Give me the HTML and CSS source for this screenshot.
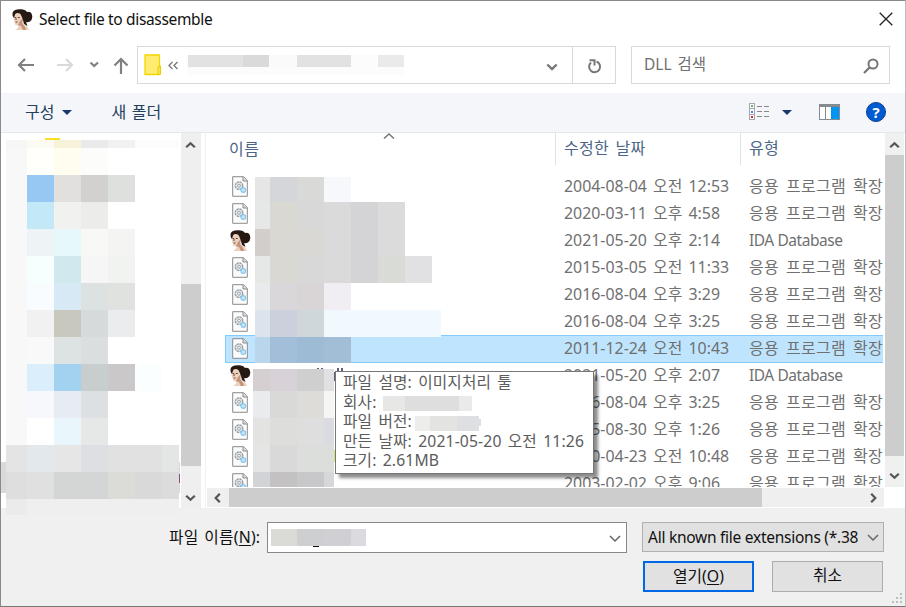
FILE: index.html
```
<!DOCTYPE html>
<html lang="ko">
<head>
<meta charset="utf-8">
<title>Select file to disassemble</title>
<link rel="stylesheet" href="styles.css">
</head>
<body>
<svg width="0" height="0" class="defs">
  <symbol id="face" viewBox="0 0 21 21">
    <path fill="#ecd0be" d="M2.500 4Q6 1 10 4L12 9L11 13L12 16Q15 16 17 21H3.500L6.500 18L6 16.500L3.500 16L2.500 13L1.500 10Z"/>
    <path fill="#c4937a" d="M8 12L11 9L10 14L13 18L14 21H11L9 17L6 16Z"/>
    <path fill="#261813" d="M.5 4Q1 .5 8 .3Q13 0 15 3Q19 2 20 6Q21 8 19.500 11Q17 14 14 13L15.500 17L12 15L11 11Q10 8 8.500 5Q5.500 3 3.200 5L2 9Q0 7 .5 4Z"/>
    <path stroke="#5b3425" stroke-width=".9" fill="none" d="M2.500 8.500H4.200M5.800 8.500H7.800M3.500 13H5.500M4 9V11"/>
  </symbol>
  <symbol id="dll" viewBox="0 0 16 21">
    <path fill="#fbfbfb" stroke="#8b8b8b" d="M.7.700H11.500L15.300 4.500V20.300H.7Z"/>
    <path fill="#ddd" stroke="#8b8b8b" d="M11 .7V5H15.300"/>
    <circle cx="7" cy="9.700" r="3.700" fill="#edf1f3" stroke="#9aa2a8" stroke-width="1.500" stroke-dasharray="2.300 .6"/>
    <circle cx="7" cy="9.700" r="1.500" fill="none" stroke="#8d989f" stroke-width=".9"/>
    <circle cx="11.300" cy="14" r="2.300" fill="#bfe6fb" stroke="#8cc8ea" stroke-width="1.200"/>
  </symbol>
  <symbol id="down" viewBox="0 0 12 8"><path d="M1.300 1.500L6 6L10.700 1.500" fill="none" stroke="currentColor" stroke-width="2.400"/></symbol>
  <symbol id="thin-down" viewBox="0 0 12 8"><path d="M1 1L6 6L11 1" fill="none" stroke="currentColor" stroke-width="1.500"/></symbol>
</svg>
<main class="dialog">
  <header class="title"><svg class="face"><use href="#face"/></svg><h1>Select file to disassemble</h1>
    <svg class="close" viewBox="0 0 14 14"><path d="M.7.700L13.300 13.300M13.300.7L.7 13.300" fill="none" stroke="#222" stroke-width="1.300"/></svg>
  </header>
  <nav class="nav">
    <svg class="arrows" viewBox="0 0 120 24" fill="none" stroke="#808080" stroke-width="2.200">
      <path d="M9 12H24M15 6L9 12L15 18"/><path stroke="#d9d9d9" d="M47 12H62M56 6L62 12L56 18"/>
      <path d="M80.500 9.500L84.200 13L88 9.500"/><path d="M111 21V6M104.500 12.500L111 6L117.500 12.500"/>
    </svg>
    <div class="address">
      <svg class="folder" viewBox="0 0 18 22"><path d="M1 1H15.500V20.500H1Z" fill="#ffec70" stroke="#f3d600" stroke-width="1.300"/><path d="M14 20.500V13L16.500 12V20.500Z" fill="#ffe440" stroke="#eccb00"/></svg>
      <svg class="chev" viewBox="0 0 12 9"><path d="M5.500 1L2 4.500L5.500 8M10.500 1L7 4.500L10.500 8" fill="none" stroke="#777" stroke-width="1.300"/></svg>
      <svg class="pathmask" viewBox="0 0 217 20" shape-rendering="crispEdges"><path fill="#fcfcfc" d="M0 0H217V20H0Z"/><path fill="#e2e2e2" d="M1 0H56V12H1ZM110 0H164V12H110Z"/><path fill="#dadada" d="M56 0H82V12H56Z"/><path fill="#fafafa" d="M82 0H110V12H82Z"/><path fill="#eaeaea" d="M191 0H217V12H191Z"/></svg>
      <svg class="drop"><use href="#down"/></svg>
      <div class="refresh"><svg viewBox="0 0 14 15"><path d="M8.500 2.500A5.500 5.500 0 1 1 3 3.500M1.500 1.200H6.500V6.500" fill="none" stroke="#777" stroke-width="2"/></svg></div>
    </div>
    <div class="search"><span>DLL 검색</span><svg viewBox="0 0 16 16"><circle cx="10" cy="6" r="4.500" fill="none" stroke="#777" stroke-width="2"/><path d="M6.800 9.200L1 15" stroke="#777" stroke-width="2.300"/></svg></div>
  </nav>
  <div class="toolbar">
    <span class="organize">구성</span><i class="tri"></i><span class="new">새 폴더</span>
    <svg class="view" viewBox="0 0 22 18" fill="none" shape-rendering="crispEdges"><path stroke="#a8a8a8" fill="#fff" d="M.5.500H5.500V16.500H.5ZM.5 5.500H5.500M.5 11.500H5.500"/><path stroke="#888" stroke-dasharray="5 2" d="M8 3.500H21M8 8.500H21M8 13.500H21"/><path fill="#6a9" d="M2 2H4V4H2Z"/><path fill="#48e" d="M2 8H4V10H2Z"/><path fill="#e23" d="M2 13H4V15H2Z"/></svg>
    <i class="tri second"></i>
    <svg class="pane" viewBox="0 0 21 16" shape-rendering="crispEdges"><path fill="#868b90" d="M0 0H21V16H0Z"/><path fill="#fff" d="M1 3H6V15H1ZM7 3H12V15H7Z"/><path fill="#0094f5" d="M12 3H20V15H12Z"/></svg>
    <span class="help">?</span>
  </div>
  <section class="content">
    <aside class="tree">
      <svg class="treemask" viewBox="1 133 180 382" shape-rendering="crispEdges">
        <path fill="#f0f0f0" d="M1 508H181V515H1Z"/><path fill="#fbdf23" d="M45 138H60V140H45Z"/>
        <path fill="#d9d9d9" d="M1 462H180V493H1Z"/><path fill="#8b4a86" d="M179 474H180V483H179Z"/>
        <path fill="#f8f8f8" d="M6 140H27V445H6Z"/><path fill="#f5f7f6" d="M6 140H27V148H6Z"/>
        <path fill="#fbfbf3" d="M27 140H54V148H27Z"/><path fill="#f7f2da" d="M54 140H81V148H54Z"/><path fill="#eaeaea" d="M81 140H108V148H81Z"/><path fill="#f0f2f1" d="M108 140H135V148H108Z"/><path fill="#fbfdfc" d="M135 140H179V148H135Z"/>
        <path fill="#fffffb" d="M27 148H54V175H27Z"/><path fill="#fffdef" d="M54 148H81V175H54Z"/><path fill="#fcfdfa" d="M81 148H108V175H81Z"/>
        <path fill="#97c8f4" d="M27 175H54V202H27Z"/><path fill="#e2e0de" d="M54 175H81V202H54Z"/><path fill="#d2d1cf" d="M81 175H108V202H81Z"/><path fill="#dee0de" d="M108 175H135V202H108Z"/>
        <path fill="#c3e9f8" d="M27 202H54V229H27Z"/><path fill="#f1f1f0" d="M54 202H81V229H54Z"/><path fill="#ececeb" d="M81 202H108V229H81Z"/>
        <path fill="#eef4f6" d="M27 229H54V256H27Z"/><path fill="#e7f8fc" d="M54 229H81V256H54Z"/><path fill="#f8f8f6" d="M81 229H108V256H81Z"/><path fill="#f4f4f3" d="M108 229H135V256H108Z"/>
        <path fill="#f5fffe" d="M27 256H54V283H27Z"/><path fill="#d0e8ee" d="M54 256H81V283H54Z"/><path fill="#f6f6f7" d="M81 256H108V283H81Z"/><path fill="#f1f3f0" d="M108 256H135V283H108Z"/>
        <path fill="#f8fcff" d="M27 283H54V310H27Z"/><path fill="#d6e9f5" d="M54 283H81V310H54Z"/><path fill="#dce1e2" d="M81 283H108V310H81Z"/><path fill="#e0e2e0" d="M108 283H135V310H108Z"/>
        <path fill="#f1f1f1" d="M27 310H54V337H27Z"/><path fill="#c8c8be" d="M54 310H81V337H54Z"/><path fill="#d6dadb" d="M81 310H108V337H81Z"/><path fill="#ebecee" d="M108 310H135V337H108Z"/>
        <path fill="#f9f9f9" d="M27 337H54V364H27Z"/><path fill="#dde3e3" d="M54 337H81V364H54Z"/><path fill="#dadede" d="M81 337H108V364H81Z"/>
        <path fill="#dbeefc" d="M27 364H54V391H27Z"/><path fill="#a2d2ef" d="M54 364H81V391H54Z"/><path fill="#c8cdcd" d="M81 364H108V391H81Z"/><path fill="#cbc8c9" d="M108 364H135V391H108Z"/><path fill="#fbfeff" d="M135 364H162V391H135Z"/>
        <path fill="#f7f8fb" d="M27 391H54V418H27Z"/><path fill="#e7ebf4" d="M54 391H81V418H54Z"/><path fill="#dce0e3" d="M81 391H108V418H81Z"/>
        <path fill="#e9f6fc" d="M54 418H81V445H54Z"/><path fill="#e6e8e7" d="M81 418H108V445H81Z"/>
        <path fill="#e4e4e4" d="M6 445H27V472H6Z"/><path fill="#e3e8ec" d="M27 445H54V472H27Z"/><path fill="#e6e6e6" d="M54 445H81V472H54Z"/><path fill="#dedfe2" d="M81 445H108V472H81Z"/><path fill="#e1e1e1" d="M108 445H162V472H108Z"/><path fill="#e4e6e5" d="M162 445H179V472H162Z"/>
        <path fill="#dedede" d="M6 472H27V499H6Z"/><path fill="#e0e0e0" d="M27 472H54V499H27Z"/><path fill="#d4d6d5" d="M54 472H108V499H54Z"/><path fill="#dbdbd8" d="M108 472H135V499H108Z"/><path fill="#d9d9d9" d="M135 472H162V499H135Z"/><path fill="#dcdcdc" d="M162 472H179V499H162Z"/>
        <path fill="#ebebeb" d="M6 499H27V515H6Z"/><path fill="#efefef" d="M27 499H179V515H27Z"/>
      </svg>
    </aside>
    <div class="vscroll left"><svg class="up"><use href="#down"/></svg><i></i><svg><use href="#down"/></svg></div>
    <div class="split"></div>
    <div class="files">
      <div class="listarea">
        <div class="list">
          <svg class="sort" viewBox="0 0 12 6"><path d="M1 5.500L6 1L11 5.500" fill="none" stroke="#777" stroke-width="1.500"/></svg>
          <div class="row head"><span class="name">이름</span><span class="date">수정한 날짜</span><span class="type">유형</span></div>
          <div class="row"><span class="name"><svg class="dll"><use href="#dll"/></svg></span><span class="date">2004-08-04 오전 12:53</span><span class="type">응용 프로그램 확장</span></div>
          <div class="row"><span class="name"><svg class="dll"><use href="#dll"/></svg></span><span class="date">2020-03-11 오후 4:58</span><span class="type">응용 프로그램 확장</span></div>
          <div class="row"><span class="name"><svg class="face"><use href="#face"/></svg></span><span class="date">2021-05-20 오후 2:14</span><span class="type en">IDA Database</span></div>
          <div class="row"><span class="name"><svg class="dll"><use href="#dll"/></svg></span><span class="date">2015-03-05 오전 11:33</span><span class="type">응용 프로그램 확장</span></div>
          <div class="row"><span class="name"><svg class="dll"><use href="#dll"/></svg></span><span class="date">2016-08-04 오후 3:29</span><span class="type">응용 프로그램 확장</span></div>
          <div class="row"><span class="name"><svg class="dll"><use href="#dll"/></svg></span><span class="date">2016-08-04 오후 3:25</span><span class="type">응용 프로그램 확장</span></div>
          <div class="row selected"><span class="name"><svg class="dll"><use href="#dll"/></svg></span><span class="date">2011-12-24 오전 10:43</span><span class="type">응용 프로그램 확장</span></div>
          <div class="row"><span class="name"><svg class="face"><use href="#face"/></svg></span><span class="date">2021-05-20 오후 2:07</span><span class="type en">IDA Database</span></div>
          <div class="row"><span class="name"><svg class="dll"><use href="#dll"/></svg></span><span class="date">2016-08-04 오후 3:25</span><span class="type">응용 프로그램 확장</span></div>
          <div class="row"><span class="name"><svg class="dll"><use href="#dll"/></svg></span><span class="date">2015-08-30 오후 1:26</span><span class="type">응용 프로그램 확장</span></div>
          <div class="row"><span class="name"><svg class="dll"><use href="#dll"/></svg></span><span class="date">2010-04-23 오전 10:48</span><span class="type">응용 프로그램 확장</span></div>
          <div class="row"><span class="name"><svg class="dll"><use href="#dll"/></svg></span><span class="date">2003-02-02 오후 9:06</span><span class="type">응용 프로그램 확장</span></div>
          <svg class="namemask" viewBox="253 177 190 311" shape-rendering="crispEdges">
            <path fill="#e6e6e6" d="M255 177H270V202H255Z"/><path fill="#d5d6d9" d="M270 177H297V202H270Z"/><path fill="#d9d9d7" d="M297 177H324V202H297Z"/><path fill="#f7f8fb" d="M324 177H351V202H324Z"/>
            <path fill="#e5e8e6" d="M255 202H270V229H255ZM255 256H270V283H255Z"/><path fill="#d3cecc" d="M255 229H270V256H255Z"/><path fill="#d9d8d3" d="M270 202H297V283H270Z"/><path fill="#d8d8d8" d="M297 202H324V229H297ZM297 256H324V283H297Z"/><path fill="#d9d8d5" d="M297 229H324V256H297Z"/><path fill="#dadada" d="M324 202H351V283H324Z"/><path fill="#d4d4d7" d="M351 202H378V283H351Z"/><path fill="#dbdbdb" d="M378 202H405V256H378Z"/><path fill="#d9dbd7" d="M378 256H405V283H378Z"/><path fill="#e1e1e3" d="M405 256H432V283H405Z"/>
            <path fill="#e8eaec" d="M255 283H270V310H255Z"/><path fill="#d9d7d9" d="M270 283H297V310H270Z"/><path fill="#d9d5d7" d="M297 283H324V310H297Z"/><path fill="#f0eef3" d="M324 283H351V310H324Z"/>
            <path fill="#dbe4eb" d="M255 310H270V337H255Z"/><path fill="#cbd0dc" d="M270 310H297V337H270Z"/><path fill="#cfd7da" d="M297 310H324V337H297Z"/><path fill="#f1f8fe" d="M324 310H441V337H324Z"/>
            <path fill="#b9d6eb" d="M255 337H270V363H255Z"/><path fill="#a2bed8" d="M270 337H297V363H270Z"/><path fill="#9dbbd4" d="M297 337H324V363H297Z"/><path fill="#a2bdd6" d="M324 337H351V363H324Z"/>
            <path fill="#665a78" d="M317 368H319V369H317ZM321 368H323V369H321ZM337 368H339V371H337ZM341 368H343V371H341ZM334 372H335V381H334Z"/>
            <path fill="#d5cfd1" d="M253 369H270V391H253Z"/><path fill="#d8d2d8" d="M270 369H297V391H270Z"/><path fill="#cfcfcf" d="M297 369H324V391H297Z"/><path fill="#e1e1e3" d="M324 369H334V391H324Z"/>
            <path fill="#e9ebee" d="M253 391H270V418H253Z"/><path fill="#d9d9d8" d="M270 391H297V418H270Z"/><path fill="#dddcd9" d="M297 391H324V418H297Z"/><path fill="#f5f5f4" d="M324 391H334V418H324Z"/>
            <path fill="#e3e3e2" d="M253 418H270V445H253Z"/><path fill="#dddedb" d="M270 418H297V445H270Z"/><path fill="#dedede" d="M297 418H324V445H297Z"/><path fill="#dadbe1" d="M324 418H334V445H324Z"/>
            <path fill="#e4e5e4" d="M253 445H270V472H253Z"/><path fill="#d9d9d9" d="M270 445H297V472H270Z"/><path fill="#dcdedc" d="M297 445H334V472H297Z"/><path fill="#c7ed6e" d="M334 450H335V462H334Z"/>
            <path fill="#d2d3d6" d="M253 472H270V488H253Z"/><path fill="#c4c1c2" d="M270 472H297V488H270Z"/><path fill="#c8c8ca" d="M297 472H324V488H297Z"/><path fill="#d6d7db" d="M324 472H334V488H324Z"/>
          </svg>
        </div>
        <div class="vscroll right"><svg class="up"><use href="#down"/></svg><i></i><svg><use href="#down"/></svg></div>
      </div>
      <div class="hscroll"><svg class="lt"><use href="#down"/></svg><i></i><svg class="rt"><use href="#down"/></svg></div>
    </div>
  </section>
  <footer class="bottom">
    <div class="line1"><label>파일 이름(<u>N</u>):</label>
      <div class="filename"><svg class="filemask" viewBox="0 0 95 18" shape-rendering="crispEdges"><path fill="#dadad6" d="M0 0H26V17H0Z"/><path fill="#cdcfd1" d="M26 0H53V17H26Z"/><path fill="#cfcfd4" d="M53 0H80V17H53Z"/><path fill="#dadae0" d="M80 0H95V17H80Z"/><path fill="#111" d="M42 17H48V18H42Z"/></svg><svg class="caret"><use href="#thin-down"/></svg></div>
      <div class="select"><span>All known file extensions (*.38</span><svg class="caret"><use href="#thin-down"/></svg></div>
    </div>
    <div class="buttons"><button class="open">열기(<u>O</u>)</button><button>취소</button></div>
  </footer>
  <svg class="grip" viewBox="0 0 11 11" fill="#bdbdbd"><path d="M8 0H10V2H8ZM4 4H6V6H4ZM8 4H10V6H8ZM0 8H2V10H0ZM4 8H6V10H4ZM8 8H10V10H8Z"/></svg>
  <div class="tooltip">
    <div>파일 설명: 이미지처리 툴</div>
    <div>회사:<svg class="m1" viewBox="0 0 89 15" shape-rendering="crispEdges"><path fill="#e7e7e5" d="M0 0H22V15H0Z"/><path fill="#dedede" d="M22 0H76V15H22Z"/><path fill="#e9eaec" d="M76 0H89V15H76Z"/></svg></div>
    <div>파일 버전:<svg class="m2" viewBox="0 0 66 15" shape-rendering="crispEdges"><path fill="#ededeb" d="M0 0H15V15H0Z"/><path fill="#e3e3e2" d="M15 0H42V15H15Z"/><path fill="#dedfe3" d="M42 0H64V15H42ZM64 3H66V10H64Z"/></svg></div>
    <div>만든 날짜: 2021-05-20 오전 11:26</div>
    <div>크기: 2.61MB</div>
  </div>
</main>
</body>
</html>
```
FILE: styles.css
```
* { box-sizing: border-box; }
body { margin: 0; font: 16px/20px "Noto Sans", "Noto Sans CJK KR", sans-serif; color: #111; }
svg { display: block; flex: none; }
.defs { position: absolute; }
.dialog { position: relative; width: 906px; height: 607px; overflow: hidden; background: #fff; border: 1px solid #8a8a8a; border-right-color: #bbb; border-bottom-color: #777; display: flex; flex-direction: column; white-space: nowrap; }
.face { width: 21px; height: 21px; }
.title { height: 45px; display: flex; align-items: flex-start; padding: 8px 12px 0 11px; }
h1 { margin: 0 0 0 6px; font-size: 15.500px; line-height: 21px; font-weight: 400; letter-spacing: -.34px; }
.close { width: 14px; height: 14px; margin: 3px 0 0 auto; }
.nav { height: 47px; display: flex; align-items: flex-start; padding-left: 10px; }
.arrows { width: 120px; height: 24px; margin: 7px 6px 0 0; }
.arrows { transform: translateX(-1px); }
.address { width: 479px; height: 38px; border: 1px solid #d9d9d9; display: flex; align-items: center; padding-left: 6px; }
.folder { width: 18px; height: 22px; }
.chev { width: 12px; height: 9px; margin: 0 8px 0 5px; }
.pathmask { width: 217px; height: 20px; }
.drop { width: 12px; height: 8px; margin: 4px 0 0 142px; color: #777; }
.refresh { height: 36px; margin-left: auto; width: 43px; border-left: 1px solid #d9d9d9; display: flex; align-items: center; justify-content: center; }
.refresh svg { width: 14px; height: 15px; margin: 2px 0 0 2px; }
.search { width: 259px; height: 38px; margin-left: 15px; border: 1px solid #d9d9d9; display: flex; align-items: center; justify-content: space-between; padding: 0 10px 0 12px; color: #707070; font-size: 15.500px; word-spacing: 2px; }
.search span { margin-top: -2px; }
.search svg { width: 16px; height: 16px; margin-top: 2px; }
.toolbar { height: 40px; background: #f4f6f9; border-bottom: 1px solid #e5e7ea; display: flex; align-items: center; padding: 0 19px 1px 24px; color: #23405f; }
.toolbar span { margin-top: -1px; }
.tri { border: 5.500px solid transparent; border-top-color: #17386b; border-bottom: 0; margin-left: 8px; }
.toolbar .new { margin-left: 39px; word-spacing: 1.500px; }
.view { width: 22px; height: 18px; margin-left: auto; }
.second { margin: 1px 27px 0 11px; }
.pane { width: 21px; height: 16px; }
.toolbar .help { width: 20px; height: 20px; margin: 0 0 0 26px; border-radius: 50%; background: #005bd3; border: 1px solid #0a3f91; color: #fff; font-weight: 700; font-size: 15px; line-height: 18px; text-align: center; }
.content { height: 375px; display: flex; }
.tree { width: 180px; height: 375px; }
.treemask { width: 180px; height: 382px; position: relative; z-index: 1; }
.vscroll { width: 20px; height: 375px; background: #efefef; display: flex; flex-direction: column; align-items: center; color: #555; }
.vscroll svg, .hscroll svg { width: 11px; height: 8px; }
.up { transform: rotate(180deg); }
.vscroll i { width: 20px; background: #cdcdcd; }
.left svg { margin-right: 1px; }
.left .up { margin-top: 8px; }
.left i { height: 182px; margin: 135px 0 28px; }
.split { width: 5px; border-right: 1px solid #f1f1f1; }
.files { width: 698px; }
.listarea { height: 355px; display: flex; }
.list { width: 679px; height: 354px; padding-left: 19px; position: relative; overflow: hidden; }
.row { height: 27px; display: flex; line-height: 24px; color: #707070; border: 1px solid transparent; }
.row span { height: 25px; }
.row .name { width: 330px; padding-left: 6px; display: flex; align-items: center; }
.row .date { width: 185px; padding-left: 8px; word-spacing: 2px; letter-spacing: 0; font-size: 15.900px; }
.row .type { width: 140px; padding-left: 8px; font-size: 16px; word-spacing: 2.500px; letter-spacing: .3px; }
.row .en { font-size: 15.500px; letter-spacing: -.45px; word-spacing: 0; }
.row .dll { width: 16px; height: 21px; }
.row .face { margin-left: -2px; }
.row.head { height: 40px; border: 0; color: #4b6588; line-height: 31px; }
.row.head span { height: 32px; }
.row.head .name { padding-left: 4px; letter-spacing: .5px; }
.row.head .date, .row.head .type { border-left: 1px solid #e2e2e2; font-size: 16px; letter-spacing: .3px; }
.row.selected { background: #bfe5fe; border: 1px solid #84cbfa; border-right: 0; height: 28px; margin: 0 2px -1px 0; }
.sort { position: absolute; left: 177px; top: 0; width: 12px; height: 6px; }
.namemask { position: absolute; left: 47px; top: 44px; width: 190px; height: 311px; }
.right { width: 19px; height: 354px; background: #f0f0f0; }
.right .up { margin-top: 8px; }
.right i { width: 19px; height: 301px; margin: 6px 0 16px; }
.hscroll { width: 677px; height: 19px; margin-left: 1px; background: #efefef; display: flex; align-items: center; color: #555; }
.hscroll i { width: 533px; height: 19px; background: #cdcdcd; }
.lt { transform: rotate(90deg); margin: 0 6px 0 5px; }
.rt { transform: rotate(-90deg); margin-left: 106px; }
.bottom { flex: 1; background: #f0f0f0; padding-top: 14px; }
.line1 { display: flex; height: 31px; align-items: flex-start; }
label { width: 98px; margin: 5px 0 0 168px; font-size: 15.800px; letter-spacing: .2px; word-spacing: 1.500px; }
u { text-underline-offset: 2px; text-decoration-thickness: 1px; }
.filename { width: 360px; height: 31px; border: 1px solid #888; background: #fff; display: flex; align-items: center; justify-content: space-between; padding: 0 5px 0 3px; }
.filemask { width: 95px; height: 18px; }
.caret { width: 12px; height: 8px; color: #666; margin-top: 2px; }
.select { width: 242px; height: 30px; margin-left: 15px; border: 1px solid #b0b0b0; background: #e1e1e1; display: flex; align-items: center; justify-content: space-between; padding: 0 4px 0 5px; font-size: 15.500px; letter-spacing: -.26px; }
.buttons { display: flex; justify-content: flex-end; gap: 18px; margin-top: 8px; padding-right: 22px; }
button { width: 111px; height: 31px; border: 1px solid #adadad; background: #e1e1e1; font: inherit; color: #111; font-size: 15.800px; line-height: 26px; padding: 0 0 3px; }
.open { border: 2px solid #0067e6; padding-bottom: 2px; }
.grip { position: absolute; left: 891px; top: 592px; width: 11px; height: 11px; }
.tooltip { position: absolute; left: 334px; top: 370px; width: 259px; height: 103px; background: #fff; border: 1px solid #777; box-shadow: 4px 4px 3px rgba(0,0,0,.45); padding: 1px 0 0 7px; color: #5c5c5c; font-size: 15.700px; line-height: 19.500px; word-spacing: 2px; letter-spacing: .15px; }
.tooltip div { display: flex; height: 19.500px; }
.m1 { width: 89px; height: 15px; margin: 3px 0 0 6px; }
.m2 { width: 66px; height: 15px; margin: 4px 0 0 3px; }
```
